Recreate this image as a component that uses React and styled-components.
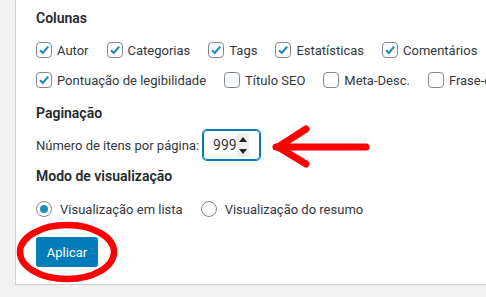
import React from 'react';
import styled, { createGlobalStyle } from 'styled-components';

const GlobalStyle = createGlobalStyle`
  html, body {
    margin: 0;
    padding: 0;
    background: #f1f1f1;
    font-family: Roboto, "Liberation Sans", sans-serif;
    font-size: 13px;
    color: #32373c;
  }
`;

const Page = styled.div`
  position: relative;
  width: 486px;
  height: 297px;
  overflow: hidden;
`;

const Panel = styled.div`
  margin-left: 15px;
  width: 600px;
  background: #fff;
  border: 1px solid #ccd0d4;
  border-top: none;
  padding: 8px 0 17px 20px;
  box-sizing: border-box;
`;

const Heading = styled.h3`
  margin: ${(p) => p.$top ?? 0}px 0 0;
  font-size: 14px;
  line-height: 20px;
  font-weight: 600;
  color: #23282d;
`;

const Row = styled.div`
  display: flex;
  align-items: center;
  height: 30px;
  white-space: nowrap;
  gap: ${(p) => p.$gap ?? 18}px;
  margin-top: ${(p) => p.$top ?? 0}px;
`;

const Item = styled.label`
  display: flex;
  align-items: center;
`;

const Box = styled.span`
  width: 16px;
  height: 16px;
  box-sizing: border-box;
  border: 1px solid #7e8993;
  border-radius: 4px;
  margin-right: 5px;
  display: flex;
  align-items: center;
  justify-content: center;
  background: #fff;
`;

const Radio = styled.span`
  width: 16px;
  height: 16px;
  box-sizing: border-box;
  border: 1px solid #7e8993;
  border-radius: 50%;
  margin-right: 8px;
  display: flex;
  align-items: center;
  justify-content: center;
  &::after {
    content: '';
    display: ${(p) => (p.$on ? 'block' : 'none')};
    width: 8px;
    height: 8px;
    border-radius: 50%;
    background: #1e8cbe;
  }
`;

const NumberBox = styled.div`
  margin-left: 4px;
  width: 57px;
  height: 30px;
  box-sizing: border-box;
  border: 1px solid #007cba;
  box-shadow: 0 0 0 1px #007cba;
  border-radius: 4px;
  display: flex;
  align-items: center;
  padding-left: 9px;
  font-size: 14px;
  color: #32373c;
`;

const Spinner = styled.div`
  width: 12px;
  height: 24px;
  background: #efefef;
  display: flex;
  flex-direction: column;
  align-items: center;
  justify-content: space-around;
`;

const Button = styled.button`
  margin-top: 13px;
  width: 62px;
  height: 30px;
  border: none;
  border-radius: 3px;
  background: #007cba;
  color: #fff;
  font-family: inherit;
  font-size: 13px;
  padding: 0;
`;

const Overlay = styled.svg`
  position: absolute;
  top: 0;
  left: 0;
  pointer-events: none;
`;

const Check = () => (
  <svg width="12" height="12" viewBox="0 0 12 12">
    <path d="M2 6.2 L4.8 9 L10.2 2.6" fill="none" stroke="#1e8cbe" strokeWidth="2.2" />
  </svg>
);

const CheckItem = ({ on, children }) => (
  <Item>
    <Box>{on && <Check />}</Box>
    {children}
  </Item>
);

const App = () => (
  <Page>
    <GlobalStyle />
    <Panel>
      <Heading>Colunas</Heading>
      <Row $top={7}>
        <CheckItem on>Autor</CheckItem>
        <CheckItem on>Categorias</CheckItem>
        <CheckItem on>Tags</CheckItem>
        <CheckItem on>Estatísticas</CheckItem>
        <CheckItem on>Comentários</CheckItem>
      </Row>
      <Row>
        <CheckItem on>Pontuação de legibilidade</CheckItem>
        <CheckItem>Título SEO</CheckItem>
        <CheckItem>Meta-Desc.</CheckItem>
        <CheckItem>Frase-chave</CheckItem>
      </Row>
      <Heading $top={8}>Paginação</Heading>
      <Row $top={7} $gap={0}>
        <span>Número de itens por página:</span>
        <NumberBox>
          999
          <Spinner>
            <svg width="8" height="5" viewBox="0 0 8 5"><path d="M0 5 L4 0 L8 5 Z" fill="#222" /></svg>
            <svg width="8" height="5" viewBox="0 0 8 5"><path d="M0 0 L4 5 L8 0 Z" fill="#222" /></svg>
          </Spinner>
        </NumberBox>
      </Row>
      <Heading $top={6}>Modo de visualização</Heading>
      <Row $top={8} $gap={18}>
        <Item><Radio $on />Visualização em lista</Item>
        <Item><Radio />Visualização do resumo</Item>
      </Row>
      <Button>Aplicar</Button>
    </Panel>
    <Overlay width="486" height="297" viewBox="0 0 486 297">
      <g fill="none" stroke="#ff0000" strokeWidth="7" strokeLinecap="round" strokeLinejoin="round">
        <path d="M276 147 L366 147" />
        <path d="M306 129 L278 147 L306 164" />
      </g>
      <ellipse cx="67" cy="252" rx="47" ry="27" fill="none" stroke="#ff0000" strokeWidth="6.5" />
    </Overlay>
  </Page>
);

export default App;
